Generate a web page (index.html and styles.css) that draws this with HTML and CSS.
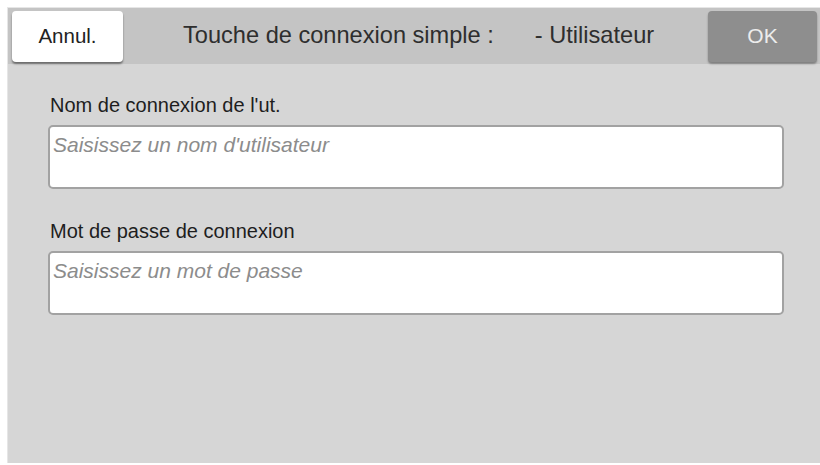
FILE: index.html
```html
<!DOCTYPE html>
<html lang="fr">
<head>
    <meta charset="UTF-8">
    <meta name="viewport" content="width=device-width, initial-scale=1.0">
    <title>Touche de connexion simple</title>
    <link rel="stylesheet" href="styles.css">
</head>
<body>
    <div class="panel">
        <div class="topbar">
            <button class="btn btn-cancel">Annul.</button>
            <div class="title">
                <span class="title-main">Touche de connexion simple :</span>
                <span class="title-sub">- Utilisateur</span>
            </div>
            <button class="btn btn-ok">OK</button>
        </div>

        <div class="form">
            <div class="field">
                <label class="field-label">Nom de connexion de l'ut.</label>
                <div class="field-box">Saisissez un nom d'utilisateur</div>
            </div>
            <div class="field">
                <label class="field-label">Mot de passe de connexion</label>
                <div class="field-box">Saisissez un mot de passe</div>
            </div>
        </div>
    </div>
</body>
</html>
```

FILE: styles.css
```css
body, html {
    margin: 0;
    padding: 0;
    background: #fff;
    font-family: "Liberation Sans", Arial, sans-serif;
}
.panel {
    margin: 7px 0 0 7px;
    height: 455px;
    background: #d6d6d6;
    border-left: 1px solid #e6e6e6;
    border-top: 1px solid #e6e6e6;
    display: flex;
    flex-direction: column;
}
.topbar {
    height: 56px;
    background: #c4c4c4;
    display: flex;
    align-items: center;
    padding: 0 3px 0 4px;
    box-sizing: border-box;
}
.btn {
    height: 51px;
    border: none;
    border-radius: 4px;
    font-family: inherit;
    cursor: pointer;
}
.btn-cancel {
    width: 111px;
    background: #fff;
    color: #222;
    font-size: 20.5px;
    box-shadow: 0 2px 2px rgba(0, 0, 0, 0.45);
}
.btn-ok {
    width: 109px;
    background: #8e8e8e;
    color: #ececec;
    font-size: 21px;
    box-shadow: 0 2px 2px rgba(0, 0, 0, 0.35);
}
.title {
    flex: 1;
    display: flex;
    font-size: 23.6px;
    color: #2e2e2e;
    padding-left: 60px;
    padding-bottom: 2px;
}
.title-main {
    margin-right: 41px;
}
.form {
    padding: 29px 36px 0 40px;
}
.field {
    margin-bottom: 30px;
}
.field-label {
    display: block;
    font-size: 20px;
    line-height: 24px;
    color: #1e1e1e;
    padding-left: 2px;
    margin-bottom: 8px;
}
.field-box {
    height: 64px;
    background: #fff;
    border: 2px solid #a2a2a2;
    border-radius: 5px;
    padding: 6px 0 0 3px;
    box-sizing: border-box;
    font-size: 21px;
    line-height: 24px;
    font-style: italic;
    color: #8c8c8c;
}
```
